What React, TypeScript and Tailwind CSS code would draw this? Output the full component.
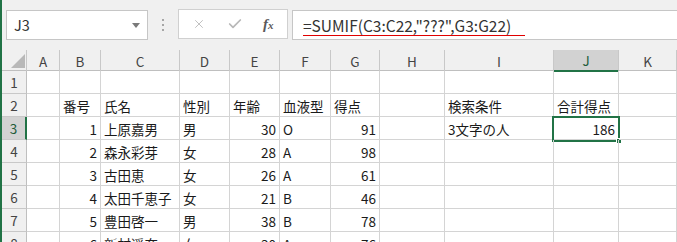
import { X, Check } from 'lucide-react';

const cols = ['A', 'B', 'C', 'D', 'E', 'F', 'G', 'H', 'I', 'J', 'K'];

type Cell = { v: string; right?: boolean };

const rows: Record<number, Record<string, Cell>> = {
  2: {
    B: { v: '番号' },
    C: { v: '氏名' },
    D: { v: '性別' },
    E: { v: '年齢' },
    F: { v: '血液型' },
    G: { v: '得点' },
    I: { v: '検索条件' },
    J: { v: '合計得点' },
  },
  3: {
    B: { v: '1', right: true },
    C: { v: '上原嘉男' },
    D: { v: '男' },
    E: { v: '30', right: true },
    F: { v: 'O' },
    G: { v: '91', right: true },
    I: { v: '3文字の人' },
    J: { v: '186', right: true },
  },
  4: {
    B: { v: '2', right: true },
    C: { v: '森永彩芽' },
    D: { v: '女' },
    E: { v: '28', right: true },
    F: { v: 'A' },
    G: { v: '98', right: true },
  },
  5: {
    B: { v: '3', right: true },
    C: { v: '古田恵' },
    D: { v: '女' },
    E: { v: '26', right: true },
    F: { v: 'A' },
    G: { v: '61', right: true },
  },
  6: {
    B: { v: '4', right: true },
    C: { v: '太田千恵子' },
    D: { v: '女' },
    E: { v: '21', right: true },
    F: { v: 'B' },
    G: { v: '46', right: true },
  },
  7: {
    B: { v: '5', right: true },
    C: { v: '豊田啓一' },
    D: { v: '男' },
    E: { v: '38', right: true },
    F: { v: 'B' },
    G: { v: '78', right: true },
  },
  8: {
    B: { v: '6', right: true },
    C: { v: '新村遥奈' },
    D: { v: '女' },
    E: { v: '30', right: true },
    F: { v: 'A' },
    G: { v: '76', right: true },
  },
};

const gridCols = 'grid grid-cols-[25px_33px_41px_79px_50px_50px_51px_49px_65px_109px_65px_1fr]';
const font = { fontFamily: '"Noto Sans CJK JP", "Noto Sans", sans-serif' };

export default function App() {
  return (
    <div className="relative w-[677px] h-[242px] overflow-hidden bg-white border-l-2 border-[#217346]" style={font}>
      {/* Formula bar */}
      <div className="h-[50px] bg-[#f0f0f0] flex items-start pt-[10px]">
        <div className="ml-[4px] w-[142px] h-[30px] bg-white border border-[#c6c6c6] flex items-center justify-between pl-[7px] pr-[7px]">
          <span className="text-[14.5px] text-[#333]">J3</span>
          <span className="w-0 h-0 border-l-[4px] border-r-[4px] border-t-[5px] border-l-transparent border-r-transparent border-t-[#7a7a7a]" />
        </div>
        <div className="w-[30px] h-[30px] flex flex-col items-center justify-center gap-[3px]">
          <span className="w-[2px] h-[2px] bg-[#a6a6a6]" />
          <span className="w-[2px] h-[2px] bg-[#a6a6a6]" />
          <span className="w-[2px] h-[2px] bg-[#a6a6a6]" />
        </div>
        <div className="w-[110px] h-[30px] -mt-[1px] bg-white border border-[#d0d0d0] flex items-center pl-[13px]">
          <X className="w-[14px] h-[14px] text-[#b8b8b8]" strokeWidth={1.5} />
          <Check className="w-[16px] h-[16px] text-[#b8b8b8] ml-[21px]" strokeWidth={2.6} />
          <span
            className="ml-[20px] text-[15px] italic font-bold text-[#5a5a5a]"
            style={{ fontFamily: '"Liberation Serif", serif' }}
          >
            f<span className="text-[11px]">x</span>
          </span>
        </div>
        <div className="ml-[4px] flex-1 h-[30px] bg-white border border-r-0 border-[#c6c6c6] flex items-center pl-[10px]">
          <span className="text-[15.5px] text-[#333] leading-[20px] border-b border-[#e00000] pr-[14px]">
            =SUMIF(C3:C22,"???",G3:G22)
          </span>
        </div>
      </div>

      {/* Corner select-all triangle */}
      <svg width="14" height="14" viewBox="0 0 14 14" className="absolute left-[9px] top-[54px] z-20">
        <path d="M14 0 L14 14 L0 14 Z" fill="#b8b8b8" />
      </svg>

      {/* Column headers */}
      <div className={`${gridCols} h-[21px] bg-[#f0f0f0] border-b border-[#bfbfbf]`}>
        <div className="border-r border-[#c8c8c8]" />
        {cols.map((c) => (
          <div
            key={c}
            className={
              c === 'J'
                ? 'flex items-center justify-center text-[13.5px] bg-[#d2d2d2] text-[#1f5c3a] border-r border-[#c8c8c8] border-b-2 border-b-[#217346] -mb-[1px]'
                : 'flex items-center justify-center text-[13.5px] text-[#444] border-r border-[#c8c8c8]'
            }
          >
            {c}
          </div>
        ))}
      </div>

      {/* Rows */}
      {[1, 2, 3, 4, 5, 6, 7, 8].map((r) => (
        <div key={r} className={`${gridCols} h-[23px]`}>
          <div
            className={
              r === 3
                ? 'flex items-center justify-center text-[13.5px] text-[#1f5c3a] bg-[#d2d2d2] border-b border-[#c8c8c8] border-r-2 border-r-[#217346]'
                : 'flex items-center justify-center text-[13.5px] text-[#444] bg-[#f0f0f0] border-b border-[#c8c8c8] border-r border-r-[#bfbfbf]'
            }
          >
            {r}
          </div>
          {cols.map((c) => {
            const cell = rows[r]?.[c];
            return (
              <div
                key={c}
                className={`relative flex items-center pt-[2px] px-[3px] text-[13.5px] text-[#1a1a1a] whitespace-nowrap border-r border-b border-[#d4d4d4] ${
                  cell?.right ? 'justify-end' : 'justify-start'
                }`}
              >
                {cell?.v}
                {r === 3 && c === 'J' && (
                  <>
                    <span className="absolute -left-[2px] -top-[1px] w-[68px] h-[26px] border-2 border-[#217346] pointer-events-none" />
                    <span className="absolute left-[62px] top-[21px] w-[6px] h-[6px] bg-[#217346] border border-white pointer-events-none" />
                  </>
                )}
              </div>
            );
          })}
        </div>
      ))}
    </div>
  );
}
